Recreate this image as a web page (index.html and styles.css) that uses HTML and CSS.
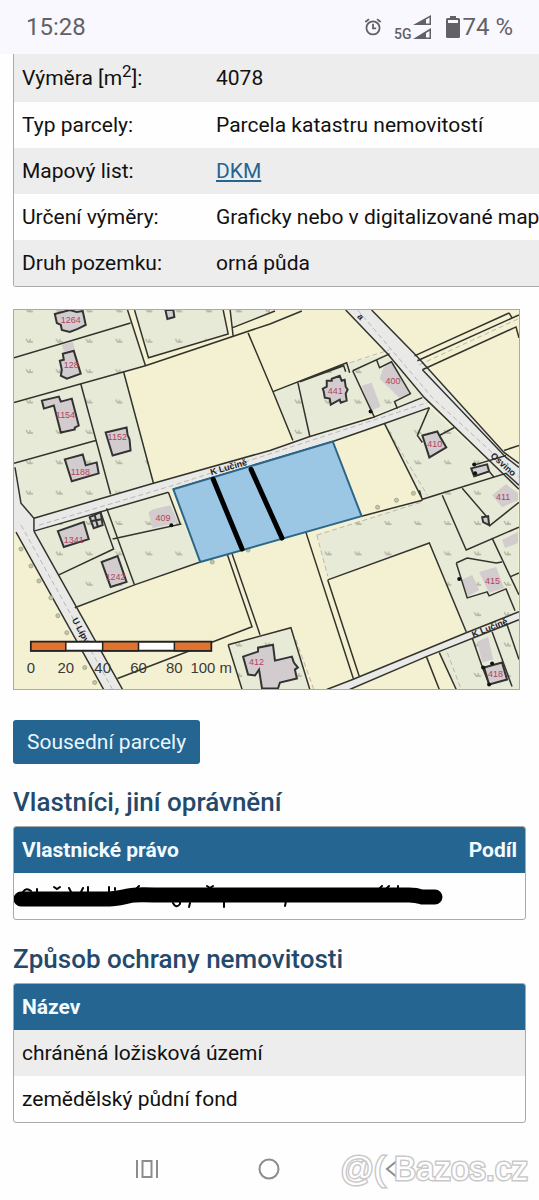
FILE: index.html
```
<!DOCTYPE html>
<html lang="cs">
<head>
    <meta charset="UTF-8">
    <meta name="viewport" content="width=device-width, initial-scale=1.0">
    <title>Informace o pozemku</title>
    <link rel="stylesheet" href="styles.css">
</head>

<body>
    <header class="status-bar">
        <span class="time">15:28</span>
        <div class="status-icons">
            <svg class="alarm" width="18" height="18" viewBox="0 0 20 20">
                <circle cx="10" cy="11" r="7.3"/>
                <path d="M10 6.500v5h3.500M1.500 4.500l4-3.300M18.500 4.500l-4-3.300"/>
            </svg>
            <span class="network">5G</span>
            <svg class="signal" width="19" height="26" viewBox="0 0 19 26">
                <path d="M0 11L18 1v10zM0 25L18 14v11z"/>
                <path class="signal-gap" d="M13 5.500L16.500 3.500v6H13zM13 19L16.500 17v6.500H13z"/>
            </svg>
            <svg class="battery" width="14" height="24" viewBox="0 0 14 24">
                <path d="M4 1h6v2h2.500q1.500 0 1.500 1.500v17q0 1.500-1.500 1.500h-11Q0 23 0 21.500v-17Q0 3 1.500 3H4z"/>
                <path class="signal-gap" d="M2 5h10v3H2z"/>
            </svg>
            <span class="time">74 %</span>
        </div>
    </header>

    <main class="content">
        <table class="table details">
            <tbody>
                <tr class="first"><th scope="row">Výměra [m<sup>2</sup>]:</th><td>4078</td></tr>
                <tr><th scope="row">Typ parcely:</th><td>Parcela katastru nemovitostí</td></tr>
                <tr><th scope="row">Mapový list:</th><td><a href="#">DKM</a></td></tr>
                <tr><th scope="row">Určení výměry:</th><td>Graficky nebo v digitalizované mapě</td></tr>
                <tr><th scope="row">Druh pozemku:</th><td>orná půda</td></tr>
            </tbody>
        </table>

        <svg class="map" viewBox="13 309 507 381" role="img" aria-label="Mapa">
            <defs>
                <pattern id="grass" x="22" y="333" width="30" height="30.500" patternUnits="userSpaceOnUse">
                    <path d="M3 5l2 3h5M7 8V5" fill="none" stroke="#a3a694" stroke-width="1"/>
                </pattern>
                <g id="gardens">
                    <path d="M13 309H127L145 365 123 371 154 483 33 518 20 503 13 467z"/>
                    <path d="M134 309L148 357 228 333 223 309zM230 309L232 327 270 312V309z"/>
                    <path d="M273 391L347 362 390 353 425 397 293 440z"/>
                    <path d="M385 423L430 407 519 488V612L467 632 430 543 328 580 317 535 423 500z"/>
                    <path d="M33 531L168 492 200 562 74 608z"/>
                    <path d="M228 645L291 628 310 690H242zM440 653L520 620V690H457z"/>
                </g>
            </defs>
            <rect class="field" x="13" y="309" width="507" height="381"/>
            <use href="#gardens" fill="#e7ead7"/>
            <use href="#gardens" fill="url(#grass)"/>

            <!-- cesty -->
            <g class="road">
                <path d="M13 467L20 503 33 518 33 531 122 690H103L13 530z"/>
                <path d="M33 518L153 483 270 450 373 417 423 397 430 407 385 423 333 441 173 489 33 531z"/>
                <path d="M346 309H372L417 355 505 452 520 463V489L425 397 388 353z"/>
                <path d="M327 690L353 680 467 633 520 612V620L427 657 350 690z"/>
            </g>
            <g class="road-axis">
                <path d="M20 525L112 690M38 525L173 485 428 402M358 309L433 397 520 477M420 364L519 318M350 362L390 349"/>
                <path d="M317 535L422 502M317 535L328 576M448 653L462 690M296 640L314 690M390 432L428 495"/>
            </g>

            <!-- budovy -->
            <g class="house">
                <path d="M61 344L72 341 74 348 63 351zM362 385L372 382 381 406 372 410zM380 378L384 367 392 361 410 393 400 397zM148 512L153 509 170 505 178 522 152 528zM462 580L473 575 480 590 468 597zM480 572L497 567 505 588 490 593zM493 495L507 484 519 493V500L503 507zM503 540L519 532V543L506 548zM478 642L489 637 494 660 483 663z"/>
            </g>
            <g class="house outlined">
                <path d="M54 313L56 322 60 324 61 329 69 331 77 328 85 324 82 310 76 311 69 309z"/>
                <path d="M62 353L73 350 80 373 66 378 60 375 61 369 59 360 63 359z"/>
                <path d="M41 400L58 396 60 401 71 398 78 425 74 427 74 429 60 432 53 405 43 408z"/>
                <path d="M105 432L126 427 127 434 129 439 130 450 112 455z"/>
                <path d="M64 459L82 454 85 465 96 462 98 473 71 481z"/>
                <path d="M165 309L167 318 174 316 173 309z"/>
                <path d="M57 531L83 522 88 539 63 547zM101 562L117 556 126 582 110 587z"/>
                <path d="M89 517L100 512 102 525 93 528zM94 515L97 526M90 521L101 519"/>
                <path d="M327 380L332 380 332 378 340 375 342 380 345 379 346 386 348 389 346 393 347 400 341 402 340 399 331 404 330 398 325 397 324 391 323 388 327 386z"/>
                <path d="M423 435L438 431 440 435 447 447 430 457z"/>
                <path d="M243 657L258 652 258 648 273 645 275 661 292 657 294 663 298 668 295 670 297 679 280 683 278 689H262L259 670 255 676 248 675z"/>
                <path d="M472 468L475 476 490 471 488 464zM485 668L503 663 508 680 490 685zM483 517L489 516 490 525 484 522z"/>
            </g>

            <!-- hranice parcel -->
            <g class="border-line">
                <path d="M13 357L130 322M127 309L145 365M13 402L145 365 270 323 302 310M80 383L110 494M123 371L153 483M13 463L95 440M14 467L20 503 33 518V531"/>
                <path d="M134 309L148 357 228 333 223 309M230 309L233 335M232 327L275 310M248 332L273 391 293 440M273 391L347 362 350 372 M300 381L344 365 346 371M298 382L310 436M353 370L375 417M353 370L390 353M377 359L380 367 392 361 411 393 395 401 398 408"/>
                <path d="M33 518L153 483 270 450 310 436 373 417 423 397M33 531L168 492M173 489L333 441 385 423 430 407"/>
                <path d="M346 309L388 353 425 397 520 489M372 309L417 355 505 452 520 463M423 369L507 457 520 467M415 355L510 312M418 360L520 314M423 369L517 326 520 337M510 312L513 317M505 450L520 445"/>
                <path d="M385 423L423 499 507 473 520 485M430 407L418 435 423 442M440 435L455 427M474 465L507 455M475 476L490 471 495 477M362 516L423 500M420 490L423 500M443 495L467 550 520 527M463 488L488 517M490 526L520 502"/>
                <path d="M493 538L520 595M457 563L468 558 497 563 503 562M457 563L468 598 488 592 490 596 507 589 516 611M511 577L520 573"/>
                <path d="M328 580L430 543 467 632M328 580L360 678M306 532L354 680M327 690L353 680 467 633 520 612M350 690L427 657 520 620M427 657L440 690M440 653L457 690M473 638L483 667 490 685M493 632L513 687M508 625L520 660"/>
                <path d="M227 554L252 627 117 679M232 554L260 635M228 645L291 628 310 690M228 645L242 690M15 532L103 690M33 531L122 690M58 575L113 549 100 512M106 508L134 585M112 539L180 524 168 492M74 608L134 585 200 562"/>
            </g>
            <g class="point">
                <circle cx="371" cy="411" r="2"/><circle cx="475" cy="464" r="2"/><circle cx="476" cy="473" r="2"/><circle cx="460" cy="579" r="2"/><circle cx="493" cy="664" r="2"/><circle cx="484" cy="668" r="2"/><circle cx="490" cy="685" r="2"/><circle cx="171" cy="525" r="2"/>
            </g>
            <g class="tree">
                <circle cx="20" cy="549" r="2"/><circle cx="30" cy="566" r="2"/><circle cx="38" cy="581" r="2"/><circle cx="50" cy="598" r="2"/><circle cx="57" cy="616" r="2"/><circle cx="66" cy="633" r="2"/><circle cx="84" cy="668" r="2"/><circle cx="94" cy="683" r="2"/><circle cx="212" cy="562" r="2"/><circle cx="248" cy="550" r="2"/><circle cx="378" cy="507" r="2"/><circle cx="397" cy="500" r="2"/><circle cx="414" cy="493" r="2"/>
            </g>

            <!-- vybraná parcela -->
            <path class="parcel" d="M173 489L333 441 362 516 200 562z"/>
            <path class="marker" d="M213 479L242 549M251 469L282 538"/>

            <g class="house-no">
                <text x="60" y="322">1264</text>
                <text x="63" y="367">128</text>
                <text x="55" y="417">1154</text>
                <text x="107" y="440">1152</text>
                <text x="70" y="475">1188</text>
                <text x="63" y="543">1341</text>
                <text x="105" y="580">1242</text>
                <text x="155" y="521">409</text>
                <text x="328" y="393">441</text>
                <text x="386" y="383">400</text>
                <text x="428" y="447">410</text>
                <text x="497" y="500">411</text>
                <text x="486" y="584">415</text>
                <text x="489" y="677">418</text>
                <text x="249" y="665">412</text>
            </g>
            <g class="street">
                <text transform="translate(211 475) rotate(-16)">K Lučině</text>
                <text transform="translate(491 456) rotate(42)">Osvino</text>
                <text transform="translate(71 620) rotate(62)">U Lípy</text>
                <text transform="translate(474 638) rotate(-22)">K Lučině</text>
                <text transform="translate(357 316) rotate(46)">a</text>
            </g>

            <!-- měřítko -->
            <g class="scale">
                <path class="scale-bar" d="M30 642H211V651H30z"/>
                <path class="scale-fill" d="M30 642H65V651H30zM102 642H138V651H102zM174 642H211V651H174z"/>
                <text x="30" y="673">0</text>
                <text x="65" y="673">20</text>
                <text x="102" y="673">40</text>
                <text x="138" y="673">60</text>
                <text x="174" y="673">80</text>
                <text x="211" y="673">100 m</text>
            </g>
        </svg>

        <button type="button" class="button">Sousední parcely</button>

        <h2>Vlastníci, jiní oprávnění</h2>
        <table class="table">
            <thead>
                <tr><th>Vlastnické právo</th><th class="share">Podíl</th></tr>
            </thead>
            <tbody>
                <tr>
                    <td class="owner" colspan="2">
                        <svg class="scribble" width="430" height="30" viewBox="0 0 430 30">
                            <path class="scribble-line" d="M7 18H95Q107 17 114 15T140 14H395Q402 14 408 16H421"/>
                            <path class="scribble-tick" d="M9 11q3-5 8-1M23 11V8M40 6l3 2 3-2M57 11L55 7M67 11l2-4M74 11V6M95 11V6M101 9V7M122 8l3-3M159 22q3 6 7 1V20M176 22l-1 4M193 5l3 2 3-2M210 20v6M272 20l-1 5M366 7l2-2M373 7l2-2M384 7V5"/>
                        </svg>
                    </td>
                </tr>
            </tbody>
        </table>

        <h2>Způsob ochrany nemovitosti</h2>
        <table class="table striped">
            <thead>
                <tr><th>Název</th></tr>
            </thead>
            <tbody>
                <tr><td>chráněná ložisková území</td></tr>
                <tr><td>zemědělský půdní fond</td></tr>
            </tbody>
        </table>
    </main>

    <nav class="nav-bar">
        <button type="button" aria-label="Poslední aplikace">
            <svg width="24" height="24" viewBox="0 0 24 24"><path d="M2 3v18M22 3v18M7.500 4h9v16h-9z"/></svg>
        </button>
        <button type="button" aria-label="Domů">
            <svg width="24" height="24" viewBox="0 0 24 24"><circle cx="12" cy="12" r="9.500"/></svg>
        </button>
        <button type="button" aria-label="Zpět">
            <svg width="24" height="24" viewBox="0 0 24 24"><path d="M18 3L7 12l11 9"/></svg>
        </button>
        <span class="watermark">@( Bazos.cz</span>
    </nav>
</body>
</html>
```

FILE: styles.css
```
body {
    font-family: Roboto, "Liberation Sans", sans-serif;
    font-size: 21px;
    color: #111;
    background-color: #fefefe;
    margin: 0;
    overflow-x: hidden;
}

.status-bar {
    display: flex;
    justify-content: space-between;
    align-items: center;
    height: 54px;
    padding: 0 26px;
    box-sizing: border-box;
    background-color: #f9f8fe;
    color: #626266;
}

.time {
    font-size: 24px;
}

.status-icons {
    display: flex;
    align-items: center;
}

.status-icons svg {
    fill: #626266;
}

.status-icons .alarm {
    fill: none;
    stroke: #626266;
    stroke-width: 2;
    margin-right: 12px;
}

.status-icons .signal {
    margin-right: 14px;
}

.status-icons .signal-gap {
    fill: #f9f8fe;
}

.battery {
    margin-right: 2px;
}

.network {
    font-size: 14px;
    font-weight: 500;
    padding-top: 14px;
    margin-right: 2px;
}

.content {
    padding: 0 13px;
}

.table {
    width: 100%;
    border: 1px solid #aaa;
    border-radius: 3px;
    border-spacing: 0;
    margin-bottom: 23px;
    overflow: hidden;
}

.table th,
.table td {
    height: 46px;
    padding: 0 8px;
    text-align: left;
    white-space: nowrap;
}

.table thead th {
    background-color: #246591;
    color: #f2fbff;
    font-weight: 700;
}

.table .share {
    text-align: right;
}

.details {
    border-top: none;
    border-radius: 0 0 0 3px;
    margin-bottom: 22px;
}

.details th {
    min-width: 178px;
    font-weight: 400;
}

.details .first th,
.details .first td {
    height: 48px;
}

.details sup {
    font-size: 17px;
    line-height: 0;
}

.details tr:nth-child(odd),
.striped tbody tr:nth-child(odd) {
    background-color: #ededed;
}

a {
    color: #246591;
}

.map {
    display: block;
    width: 507px;
    max-width: 100%;
    border: 1px solid #aaa;
    box-sizing: border-box;
}

.field {
    fill: #f4f1d2;
}

.road {
    fill: #e9e9e8;
}

.road-axis {
    fill: none;
    stroke: #bbb5b0;
    stroke-dasharray: 5 3;
}

.house {
    fill: #d2cccf;
}

.outlined {
    stroke: #333;
    stroke-width: 2;
}

.border-line {
    fill: none;
    stroke: #33332d;
    stroke-width: 1.5;
}

.point {
    fill: #111;
}

.tree {
    fill: #c3c7a6;
    stroke: #a4a88d;
}

.parcel {
    fill: #9bc7e4;
    stroke: #2c6688;
    stroke-width: 2;
}

.marker {
    stroke: #000;
    stroke-width: 5;
    stroke-linecap: round;
}

.house-no {
    font-family: "Liberation Sans", sans-serif;
    font-size: 9px;
    fill: #b5435b;
}

.street {
    font-family: "Liberation Sans", sans-serif;
    font-size: 9px;
    font-weight: 700;
    fill: #222;
}

.scale {
    font-family: "Liberation Sans", sans-serif;
    font-size: 15px;
    text-anchor: middle;
    fill: #3a3a35;
}

.scale-bar {
    fill: #fff;
    stroke: #222;
    stroke-width: 2;
}

.scale-fill {
    fill: #e0722f;
    stroke: #222;
    stroke-width: 1.5;
}

.button {
    display: block;
    height: 44px;
    margin: 30px 0 22px;
    padding: 0 14px;
    border: none;
    border-radius: 3px;
    background-color: #246591;
    color: #e8f6ff;
    font-family: inherit;
    font-size: 21px;
    cursor: pointer;
}

h2 {
    font-size: 26px;
    line-height: 32px;
    font-weight: 500;
    color: #24496a;
    margin: 0 0 8px;
}

.table .owner {
    padding: 0;
}

.scribble {
    display: block;
    max-width: 100%;
}

.scribble-line,
.scribble-tick {
    fill: none;
    stroke: #000;
    stroke-width: 15;
    stroke-linecap: round;
}

.scribble-tick {
    stroke-width: 2;
}

.nav-bar {
    position: relative;
    display: flex;
    justify-content: space-around;
    align-items: center;
    height: 46px;
    padding: 0 16%;
}

.nav-bar button {
    border: none;
    background: none;
    padding: 0;
    height: 24px;
}

.nav-bar svg {
    display: block;
    fill: none;
    stroke: #8c8c8c;
    stroke-width: 2;
}

.watermark {
    position: absolute;
    right: 11px;
    top: 4px;
    font-family: "Liberation Sans", Arial, sans-serif;
    font-size: 33px;
    line-height: 38px;
    color: #fefefe;
    -webkit-text-stroke: 3px #c8c8c8;
    paint-order: stroke fill;
}
```
